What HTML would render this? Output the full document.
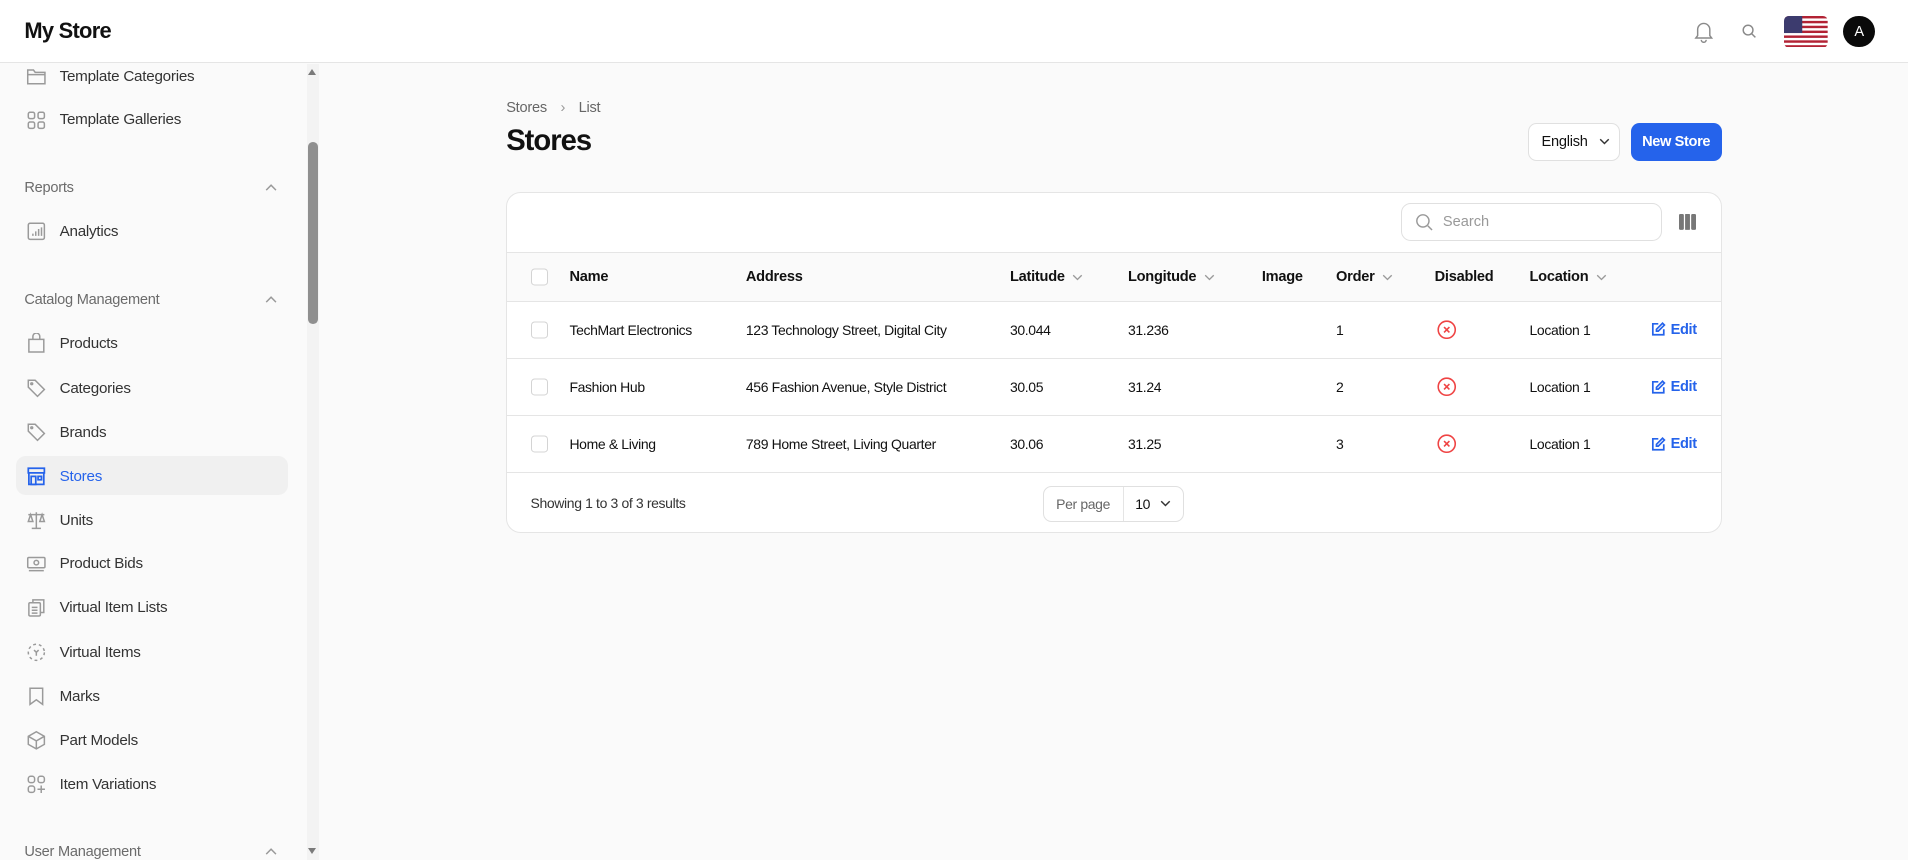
<!DOCTYPE html>
<html><head><meta charset="utf-8"><style>
*{box-sizing:border-box;margin:0;padding:0}
html,body{width:1908px;height:860px;overflow:hidden;background:#fafafa}
#r{zoom:1.2168;width:1568px;height:707px;position:relative;font-family:"Liberation Sans",sans-serif;color:#111;background:#fafafa}
.abs{position:absolute}
.hdr{left:0;top:0;width:1568px;height:52px;background:#fff;border-bottom:1px solid #e5e5e5}
.logo{left:20px;top:15px;font-size:18px;font-weight:700;letter-spacing:-0.6px}
.nav{position:absolute;left:21px;display:flex;align-items:center;font-size:12.5px;color:#333;letter-spacing:-0.2px}
.nav svg{width:17px;height:17px;margin-right:11px;stroke:#9a9a9a;fill:none;stroke-width:1.3}
.sec{position:absolute;left:20px;font-size:12px;color:#6b6b6b;letter-spacing:-0.2px}
.chev{position:absolute;left:218px;width:10px;height:6px}
.hc{position:absolute;top:228px;transform:translateY(-50%);font-size:12px;font-weight:700;display:flex;align-items:center;letter-spacing:-0.2px}
.hc svg{margin-left:6px}
.c{position:absolute;transform:translateY(-50%);font-size:11.5px;letter-spacing:-0.3px;color:#111}
.cb{position:absolute;left:436px;width:14px;height:14px;border:1px solid #d4d4d4;border-radius:3px;background:#fff;transform:translateY(-50%)}
.line{position:absolute;left:416px;width:999px;height:1px;background:#e5e5e5}
</style></head><body><div id="r">
<div class="abs hdr"></div>
<div class="abs logo">My Store</div>
<svg class="abs" style="left:1392px;top:17px" width="16" height="18" viewBox="0 0 16 18" fill="none" stroke="#8a8a8a" stroke-width="1.2"><path d="M3 12V7a5 5 0 0 1 10 0v5l1.5 2h-13z"/><path d="M6 15.5a2 2 0 0 0 4 0"/></svg>
<svg class="abs" style="left:1432px;top:20px" width="12" height="12" viewBox="0 0 12 12" fill="none" stroke="#8a8a8a" stroke-width="1.2"><circle cx="5" cy="5" r="4"/><path d="M8 8l3 3"/></svg>
<svg class="abs" style="left:1466px;top:13px" width="36" height="26" viewBox="0 0 36 26"><clipPath id="fc"><rect width="36" height="26" rx="4"/></clipPath><g clip-path="url(#fc)"><rect width="36" height="26" fill="#fff"/><g fill="#b22234"><rect y="0" width="36" height="2"/><rect y="4" width="36" height="2"/><rect y="8" width="36" height="2"/><rect y="12" width="36" height="2"/><rect y="16" width="36" height="2"/><rect y="20" width="36" height="2"/><rect y="24" width="36" height="2"/></g><rect width="15" height="14" fill="#3c3b6e"/></g></svg>
<div class="abs" style="left:1515px;top:13px;width:26px;height:26px;border-radius:50%;background:#0a0a0a;color:#fff;font-size:12px;display:flex;align-items:center;justify-content:center">A</div>

<div class="abs" style="left:252px;top:53px;width:10px;height:654px;background:#f3f3f3"></div>
<div class="abs" style="left:253px;top:117px;width:8px;height:149px;background:#8f8f8f;border-radius:4px"></div>
<div class="abs" style="left:252px;top:57px;width:0;height:0;border-left:4px solid transparent;border-right:4px solid transparent;border-bottom:5px solid #7a7a7a;margin-left:1px"></div>
<div class="abs" style="left:253px;top:697px;width:0;height:0;border-left:4px solid transparent;border-right:4px solid transparent;border-top:5px solid #7a7a7a"></div>

<div class="nav" style="top:54px"><svg viewBox="0 0 18 18"><path d="M1.5 3.5h5l1.5 2h8.5v10h-15z"/><path d="M1.5 7.5h15"/></svg>Template Categories</div>
<div class="nav" style="top:90px"><svg viewBox="0 0 18 18"><rect x="2" y="2" width="5.5" height="5.5" rx="1.5"/><rect x="10.5" y="2" width="5.5" height="5.5" rx="1.5"/><rect x="2" y="10.5" width="5.5" height="5.5" rx="1.5"/><rect x="10.5" y="10.5" width="5.5" height="5.5" rx="1.5"/></svg>Template Galleries</div>
<div class="sec" style="top:148px">Reports</div>
<svg class="chev" style="top:151px" viewBox="0 0 10 6" fill="none" stroke="#999" stroke-width="1.2"><path d="M1 5l4-4 4 4"/></svg>
<div class="nav" style="top:182px"><svg viewBox="0 0 18 18"><rect x="2" y="2" width="14" height="14" rx="1.5"/><path d="M6 13v-2M8.5 13v-4M11 13V7M13.5 13V5.5"/></svg>Analytics</div>
<div class="sec" style="top:240px">Catalog Management</div>
<svg class="chev" style="top:243px" viewBox="0 0 10 6" fill="none" stroke="#999" stroke-width="1.2"><path d="M1 5l4-4 4 4"/></svg>
<div class="nav" style="top:274px"><svg viewBox="0 0 18 18"><path d="M2.5 5.5h13v11h-13z"/><path d="M6 5.5V3a3 3 0 0 1 6 0v2.5"/></svg>Products</div>
<div class="nav" style="top:311px"><svg viewBox="0 0 18 18"><path d="M2 2h6l8 8-6 6-8-8z"/><circle cx="5" cy="5" r="0.8"/></svg>Categories</div>
<div class="nav" style="top:347px"><svg viewBox="0 0 18 18"><path d="M2 2h6l8 8-6 6-8-8z"/><circle cx="5" cy="5" r="0.8"/></svg>Brands</div>
<div class="abs" style="left:13px;top:375px;width:224px;height:32px;background:#f0f0f0;border-radius:8px"></div>
<div class="nav" style="top:383px;color:#2563eb"><svg viewBox="0 0 18 18" style="stroke:#2563eb;stroke-width:1.5"><path d="M2 2h14v4H2zM2.5 6v10h13V6"/><path d="M4.5 9h4v7h-4zM10.5 9h3v3h-3z"/></svg>Stores</div>
<div class="nav" style="top:419px"><svg viewBox="0 0 18 18"><path d="M9 2v14M5 16h8M2 4h14M4 4l-2 6h4zM14 4l-2 6h4z"/></svg>Units</div>
<div class="nav" style="top:455px"><svg viewBox="0 0 18 18"><rect x="1.5" y="3" width="15" height="9" rx="1"/><circle cx="9" cy="7.5" r="2"/><path d="M2.5 14.5h13"/></svg>Product Bids</div>
<div class="nav" style="top:491px"><svg viewBox="0 0 18 18"><rect x="2.5" y="5" width="10" height="11.5" rx="1"/><path d="M6 5V2.5h9.5v11h-3M5 9h5M5 11.5h5M5 14h5"/></svg>Virtual Item Lists</div>
<div class="nav" style="top:528px"><svg viewBox="0 0 18 18" stroke-dasharray="2.5 2.5"><circle cx="9" cy="9" r="7"/><path d="M7 7l2 2 2-2M9 9v3" stroke-dasharray="none"/></svg>Virtual Items</div>
<div class="nav" style="top:564px"><svg viewBox="0 0 18 18"><path d="M3.5 2h11v14l-5.5-4-5.5 4z"/></svg>Marks</div>
<div class="nav" style="top:600px"><svg viewBox="0 0 18 18"><path d="M9 1.5l7 4v7l-7 4-7-4v-7z"/><path d="M2 5.5l7 4 7-4M9 9.5v7"/></svg>Part Models</div>
<div class="nav" style="top:636px"><svg viewBox="0 0 18 18"><rect x="2" y="2" width="5.5" height="5.5" rx="2"/><rect x="10.5" y="2" width="5.5" height="5.5" rx="2"/><rect x="2" y="10.5" width="5.5" height="5.5" rx="2"/><path d="M13.25 10v6.5M10 13.25h6.5"/></svg>Item Variations</div>
<div class="sec" style="top:694px">User Management</div>
<svg class="chev" style="top:697px" viewBox="0 0 10 6" fill="none" stroke="#999" stroke-width="1.2"><path d="M1 5l4-4 4 4"/></svg>

<div class="abs" style="left:416px;top:82px;font-size:12px;color:#666;letter-spacing:-0.2px">Stores <span style="margin:0 8px;color:#999">&#8250;</span> List</div>
<div class="abs" style="left:416px;top:103px;font-size:24px;font-weight:700;letter-spacing:-0.8px">Stores</div>
<div class="abs" style="left:1256px;top:101px;width:75px;height:31px;background:#fff;border:1px solid #e0e0e0;border-radius:7px;font-size:12px;display:flex;align-items:center;padding-left:10px;letter-spacing:-0.2px">English<svg style="margin-left:9px" width="9" height="6" viewBox="0 0 9 6" fill="none" stroke="#333" stroke-width="1.2"><path d="M1 1l3.5 3.5L8 1"/></svg></div>
<div class="abs" style="left:1340px;top:101px;width:75px;height:31px;background:#2563eb;border-radius:7px;color:#fff;font-size:12px;font-weight:700;display:flex;align-items:center;justify-content:center;letter-spacing:-0.3px">New Store</div>

<div class="abs" style="left:416px;top:158px;width:999px;height:280px;background:#fff;border:1px solid #e5e5e5;border-radius:12px;overflow:hidden">
<div class="abs" style="left:0;top:49px;width:999px;height:40px;background:#fafafa"></div>
</div>
<div class="abs" style="left:1151px;top:167px;width:215px;height:31px;border:1px solid #e0e0e0;border-radius:8px;background:#fff;display:flex;align-items:center;padding-left:11px;font-size:12px;color:#999"><svg width="15" height="15" viewBox="0 0 15 15" fill="none" stroke="#999" stroke-width="1.2" style="margin-right:8px"><circle cx="6.5" cy="6.5" r="5"/><path d="M10.5 10.5l3.5 3.5"/></svg>Search</div>
<svg class="abs" style="left:1380px;top:176px" width="14" height="13" viewBox="0 0 14 13" fill="#777"><rect x="0" y="0" width="4" height="13" rx="1"/><rect x="5" y="0" width="4" height="13" rx="0.5"/><rect x="10" y="0" width="4" height="13" rx="1"/></svg>
<div class="line" style="top:207px"></div>
<div class="line" style="top:247px"></div>
<div class="line" style="top:294px"></div>
<div class="line" style="top:341px"></div>
<div class="line" style="top:388px"></div>

<div class="cb" style="top:228px"></div>
<div class="hc" style="left:468px">Name</div>
<div class="hc" style="left:613px">Address</div>
<div class="hc" style="left:830px">Latitude<svg width="9" height="6" viewBox="0 0 9 6" fill="none" stroke="#999" stroke-width="1.1"><path d="M1 1l3.5 3.5L8 1"/></svg></div>
<div class="hc" style="left:927px">Longitude<svg width="9" height="6" viewBox="0 0 9 6" fill="none" stroke="#999" stroke-width="1.1"><path d="M1 1l3.5 3.5L8 1"/></svg></div>
<div class="hc" style="left:1037px">Image</div>
<div class="hc" style="left:1098px">Order<svg width="9" height="6" viewBox="0 0 9 6" fill="none" stroke="#999" stroke-width="1.1"><path d="M1 1l3.5 3.5L8 1"/></svg></div>
<div class="hc" style="left:1179px">Disabled</div>
<div class="hc" style="left:1257px">Location<svg width="9" height="6" viewBox="0 0 9 6" fill="none" stroke="#999" stroke-width="1.1"><path d="M1 1l3.5 3.5L8 1"/></svg></div>

<div class="cb" style="top:271px"></div>
<div class="c" style="left:468px;top:271px">TechMart Electronics</div>
<div class="c" style="left:613px;top:271px">123 Technology Street, Digital City</div>
<div class="c" style="left:830px;top:271px">30.044</div>
<div class="c" style="left:927px;top:271px">31.236</div>
<div class="c" style="left:1098px;top:271px">1</div>
<div class="c" style="left:1257px;top:271px">Location 1</div>

<div class="cb" style="top:318px"></div>
<div class="c" style="left:468px;top:318px">Fashion Hub</div>
<div class="c" style="left:613px;top:318px">456 Fashion Avenue, Style District</div>
<div class="c" style="left:830px;top:318px">30.05</div>
<div class="c" style="left:927px;top:318px">31.24</div>
<div class="c" style="left:1098px;top:318px">2</div>
<div class="c" style="left:1257px;top:318px">Location 1</div>

<div class="cb" style="top:365px"></div>
<div class="c" style="left:468px;top:365px">Home &amp; Living</div>
<div class="c" style="left:613px;top:365px">789 Home Street, Living Quarter</div>
<div class="c" style="left:830px;top:365px">30.06</div>
<div class="c" style="left:927px;top:365px">31.25</div>
<div class="c" style="left:1098px;top:365px">3</div>
<div class="c" style="left:1257px;top:365px">Location 1</div>

<svg class="abs" style="left:1181px;top:263px" width="16" height="16" viewBox="0 0 16 16" fill="none" stroke="#ef4444" stroke-width="1.3"><circle cx="8" cy="8" r="7"/><path d="M5.8 5.8l4.4 4.4M10.2 5.8l-4.4 4.4"/></svg>
<svg class="abs" style="left:1181px;top:310px" width="16" height="16" viewBox="0 0 16 16" fill="none" stroke="#ef4444" stroke-width="1.3"><circle cx="8" cy="8" r="7"/><path d="M5.8 5.8l4.4 4.4M10.2 5.8l-4.4 4.4"/></svg>
<svg class="abs" style="left:1181px;top:357px" width="16" height="16" viewBox="0 0 16 16" fill="none" stroke="#ef4444" stroke-width="1.3"><circle cx="8" cy="8" r="7"/><path d="M5.8 5.8l4.4 4.4M10.2 5.8l-4.4 4.4"/></svg>

<div class="c" style="left:1357px;top:271px;color:#2563eb;font-weight:700;font-size:12px;display:flex;align-items:center"><svg width="12" height="12" viewBox="0 0 12 12" fill="none" stroke="#2563eb" stroke-width="1.4" style="margin-right:4px"><path d="M6 1.5H1.5v9h9V6"/><path d="M9.5 1l1.5 1.5L6 7.5H4.5V6z"/></svg>Edit</div>
<div class="c" style="left:1357px;top:318px;color:#2563eb;font-weight:700;font-size:12px;display:flex;align-items:center"><svg width="12" height="12" viewBox="0 0 12 12" fill="none" stroke="#2563eb" stroke-width="1.4" style="margin-right:4px"><path d="M6 1.5H1.5v9h9V6"/><path d="M9.5 1l1.5 1.5L6 7.5H4.5V6z"/></svg>Edit</div>
<div class="c" style="left:1357px;top:365px;color:#2563eb;font-weight:700;font-size:12px;display:flex;align-items:center"><svg width="12" height="12" viewBox="0 0 12 12" fill="none" stroke="#2563eb" stroke-width="1.4" style="margin-right:4px"><path d="M6 1.5H1.5v9h9V6"/><path d="M9.5 1l1.5 1.5L6 7.5H4.5V6z"/></svg>Edit</div>

<div class="c" style="left:436px;top:413px;font-size:11.5px;color:#333">Showing 1 to 3 of 3 results</div>
<div class="abs" style="left:857px;top:399px;width:116px;height:30px;border:1px solid #e0e0e0;border-radius:7px;background:#fff"></div>
<div class="abs" style="left:923px;top:400px;width:1px;height:28px;background:#e5e5e5"></div>
<div class="c" style="left:868px;top:414px;color:#666">Per page</div>
<div class="c" style="left:933px;top:414px">10</div>
<svg class="abs" style="left:953px;top:411px" width="9" height="6" viewBox="0 0 9 6" fill="none" stroke="#333" stroke-width="1.2"><path d="M1 1l3.5 3.5L8 1"/></svg>
</div></body></html>
